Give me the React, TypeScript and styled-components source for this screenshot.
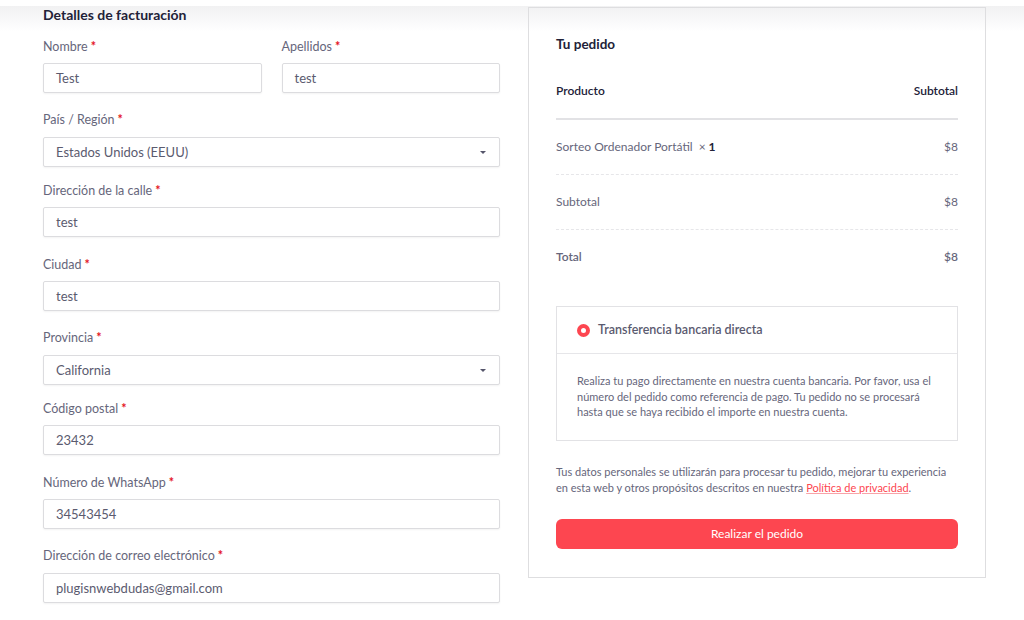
import type { FC } from 'react';

import styled, { createGlobalStyle } from 'styled-components';

const GlobalStyle = createGlobalStyle`
  html, body {
    margin: 0;
    padding: 0;
    background: #ffffff;
  }
  body {
    font-family: Lato, 'Open Sans', sans-serif;
    -webkit-font-smoothing: antialiased;
  }
`;

const ACCENT = '#fd4650';
const HEADING = '#222238';
const MUTED = '#66667b';

const Page = styled.div`
  width: 1024px;
  min-height: 620px;
  box-sizing: border-box;
  padding: 5px 38px 0 43px;
  display: flex;
  align-items: flex-start;
  gap: 28px;
  background: linear-gradient(
      to bottom,
      #ffffff 0,
      #ffffff 6px,
      #f1f1f2 6px,
      #ffffff 32px
    )
    no-repeat;
`;

const Billing = styled.section`
  width: 457px;
  flex-shrink: 0;
`;

const SectionTitle = styled.h3`
  margin: 0 0 11.5px;
  font-size: 14px;
  line-height: 20px;
  font-weight: 700;
  color: ${HEADING};
`;

const Row = styled.div`
  display: grid;
  grid-template-columns: 1fr 1fr;
  gap: 20px;
`;

const Field = styled.div<{ $select?: boolean }>`
  margin-bottom: ${({ $select }) => ($select ? '14px' : '17.3px')};
`;

const Label = styled.label`
  display: block;
  margin-bottom: 6.5px;
  font-size: 12.5px;
  line-height: 20px;
  color: ${MUTED};
`;

const Required = styled.span`
  color: #e4141e;
  font-weight: 700;
  margin-left: 3px;
`;

const Input = styled.div`
  position: relative;
  height: 30px;
  box-sizing: border-box;
  padding: 0 12px;
  border: 1px solid #dcdcdf;
  border-radius: 2px;
  box-shadow: 0 1px 2px rgba(0, 0, 0, 0.05);
  background: #ffffff;
  display: flex;
  align-items: center;
  font-size: 13px;
  color: #5b5b6f;
`;

const Caret = styled.span`
  position: absolute;
  right: 13px;
  top: 13px;
  width: 0;
  height: 0;
  border-left: 3.5px solid transparent;
  border-right: 3.5px solid transparent;
  border-top: 3.5px solid #55556a;
`;

const OrderCard = styled.section`
  width: 458px;
  flex-shrink: 0;
  box-sizing: border-box;
  margin-top: 2px;
  padding: 26px 27px 28px;
  border: 1px solid #dedee0;
`;

const OrderTitle = styled.h3`
  margin: 0 0 10px;
  font-size: 13.5px;
  line-height: 20px;
  font-weight: 700;
  color: ${HEADING};
`;

const TableRow = styled.div<{ $head?: boolean; $last?: boolean }>`
  display: flex;
  justify-content: space-between;
  padding: 17px 0;
  line-height: 20px;
  font-size: 12px;
  color: ${({ $head }) => ($head ? HEADING : MUTED)};
  font-weight: ${({ $head }) => ($head ? 600 : 400)};
  border-bottom: ${({ $head, $last }) =>
    $head ? '2px solid #e2e2e5' : $last ? 'none' : '1px dashed #e6e6e9'};
`;

const Cell = styled.span<{ $strong?: boolean }>`
  font-weight: ${({ $strong }) => ($strong ? 600 : 'inherit')};
`;

const Qty = styled.strong`
  color: ${HEADING};
  font-weight: 700;
  margin-left: 6px;
  & > span {
    font-weight: 400;
    color: ${MUTED};
  }
`;

const Payment = styled.div`
  margin-top: 22px;
  border: 1px solid #e2e2e5;
`;

const PaymentHead = styled.div`
  display: flex;
  align-items: center;
  gap: 8px;
  padding: 13px 20px;
  line-height: 20px;
  font-size: 12.5px;
  font-weight: 600;
  color: #5a5a6f;
  border-bottom: 1px solid #e6e6e9;
`;

const Radio = styled.span`
  width: 13px;
  height: 13px;
  box-sizing: border-box;
  border-radius: 50%;
  border: 4px solid ${ACCENT};
  background: #ffffff;
`;

const PaymentBody = styled.p`
  margin: 0;
  padding: 19px 20px 20px;
  font-size: 11px;
  line-height: 15.5px;
  color: ${MUTED};
`;

const Privacy = styled.p`
  margin: 23px 0 23px;
  font-size: 11px;
  line-height: 16px;
  color: ${MUTED};
`;

const PolicyLink = styled.a`
  color: ${ACCENT};
  text-decoration: underline;
  text-decoration-color: #f9a3a8;
`;

const SubmitButton = styled.button`
  display: block;
  width: 100%;
  height: 30px;
  border: none;
  border-radius: 6px;
  background: ${ACCENT};
  color: #ffffff;
  font-family: inherit;
  font-size: 12px;
  cursor: pointer;
`;

type FieldData = { label: string; value: string; select?: boolean };

const fields: FieldData[] = [
  { label: 'País / Región', value: 'Estados Unidos (EEUU)', select: true },
  { label: 'Dirección de la calle', value: 'test' },
  { label: 'Ciudad', value: 'test' },
  { label: 'Provincia', value: 'California', select: true },
  { label: 'Código postal', value: '23432' },
  { label: 'Número de WhatsApp', value: '34543454' },
  { label: 'Dirección de correo electrónico', value: 'plugisnwebdudas@gmail.com' },
];

const FormField: FC<FieldData> = ({ label, value, select }) => (
  <Field $select={select}>
    <Label>
      {label}
      <Required>*</Required>
    </Label>
    <Input>
      {value}
      {select && <Caret />}
    </Input>
  </Field>
);

const App: FC = () => {
  return (
    <>
      <GlobalStyle />
      <Page>
        <Billing>
          <SectionTitle>Detalles de facturación</SectionTitle>
          <Row>
            <FormField label="Nombre" value="Test" />
            <FormField label="Apellidos" value="test" />
          </Row>
          {fields.map((f) => (
            <FormField key={f.label} {...f} />
          ))}
        </Billing>

        <OrderCard>
          <OrderTitle>Tu pedido</OrderTitle>
          <TableRow $head>
            <span>Producto</span>
            <span>Subtotal</span>
          </TableRow>
          <TableRow>
            <span>
              Sorteo Ordenador Portátil
              <Qty>
                <span>×</span> 1
              </Qty>
            </span>
            <span>$8</span>
          </TableRow>
          <TableRow>
            <span>Subtotal</span>
            <span>$8</span>
          </TableRow>
          <TableRow $last>
            <Cell $strong>Total</Cell>
            <Cell $strong>$8</Cell>
          </TableRow>

          <Payment>
            <PaymentHead>
              <Radio />
              Transferencia bancaria directa
            </PaymentHead>
            <PaymentBody>
              Realiza tu pago directamente en nuestra cuenta bancaria. Por favor, usa el
              número del pedido como referencia de pago. Tu pedido no se procesará
              hasta que se haya recibido el importe en nuestra cuenta.
            </PaymentBody>
          </Payment>

          <Privacy>
            Tus datos personales se utilizarán para procesar tu pedido, mejorar tu experiencia
            en esta web y otros propósitos descritos en nuestra{' '}
            <PolicyLink href="#">Política de privacidad</PolicyLink>.
          </Privacy>

          <SubmitButton>Realizar el pedido</SubmitButton>
        </OrderCard>
      </Page>
    </>
  );
};

export default App;
